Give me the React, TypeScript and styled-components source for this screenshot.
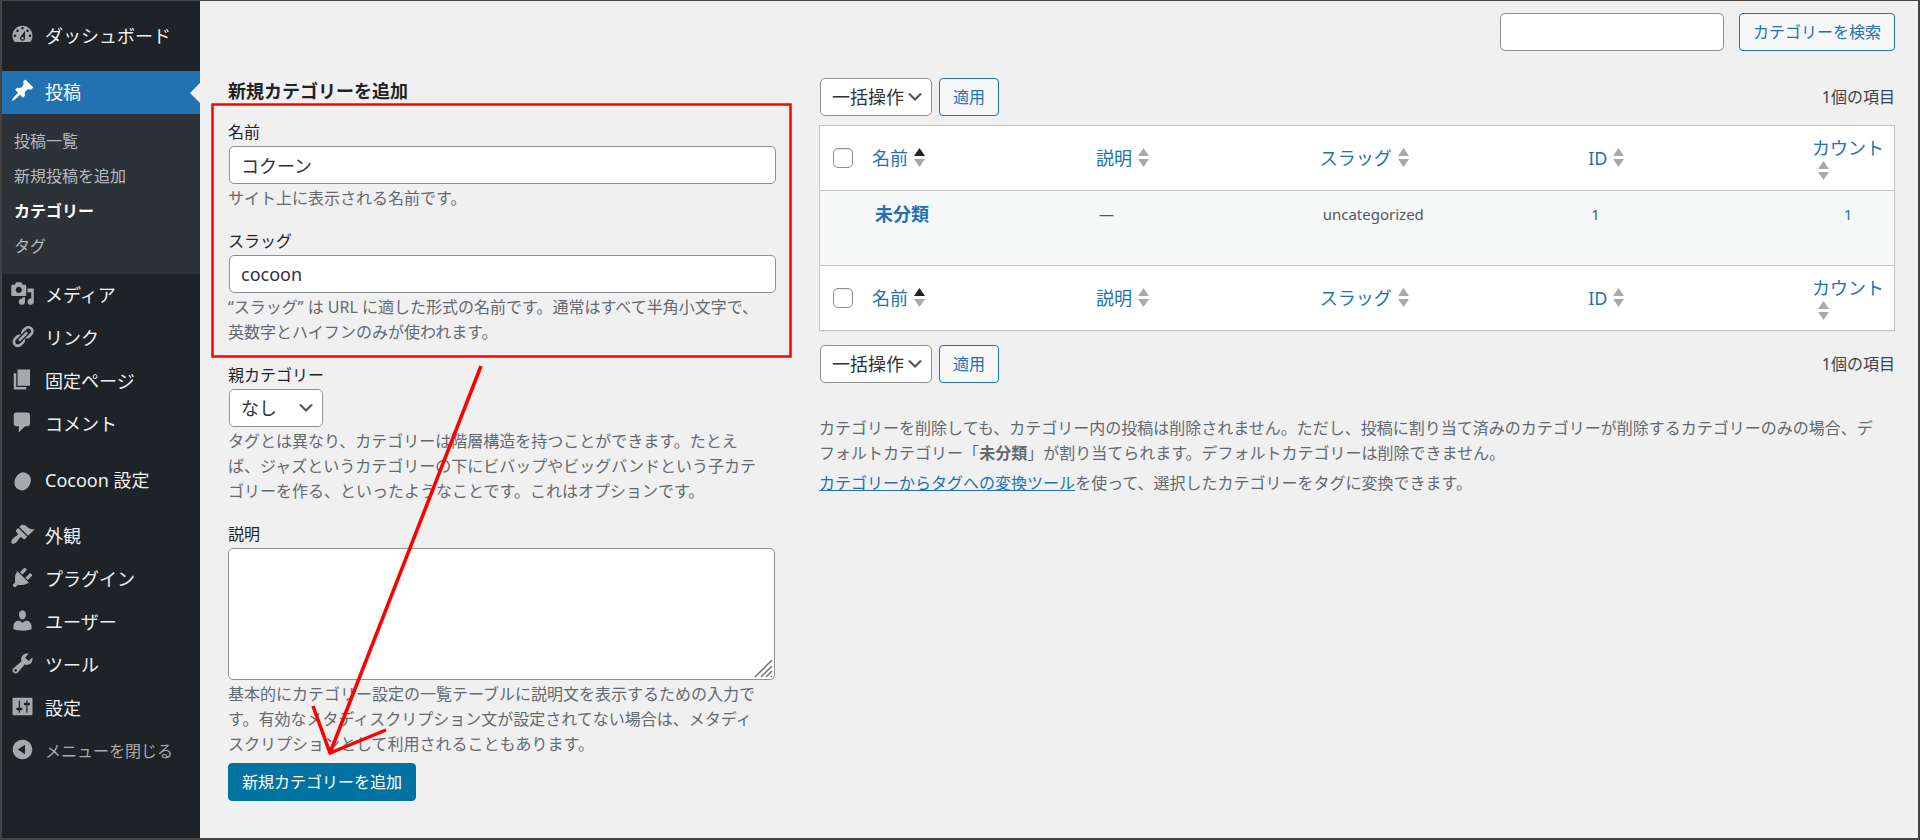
import React from 'react';
import styled, { createGlobalStyle, css } from 'styled-components';

const color = {
  page: '#f0f0f0',
  sidebar: '#1d2327',
  submenu: '#2c3338',
  blue: '#2271b1',
  primary: '#0073a3',
  text: '#1d2327',
  body: '#50575e',
  muted: '#646970',
  control: '#8c8f94',
  line: '#c3c4c7',
  icon: '#a7aaad',
  mark: '#ff0000',
};

const GlobalStyle = createGlobalStyle`
  *, *::before, *::after { box-sizing: border-box; }
  body {
    margin: 0;
    background: ${color.page};
    color: ${color.text};
    font-family: 'Noto Sans', 'Noto Sans CJK JP', sans-serif;
    font-size: 16px;
    line-height: 24px;
    text-spacing-trim: space-all;
  }
  button, input, select, textarea { font: inherit; margin: 0; }
  h2, p, ul { margin: 0; padding: 0; }
`;

const Frame = styled.div`
  display: flex;
  min-height: 100vh;
  border: solid #444444;
  border-width: 1px 2px 2px;
`;

/* ---------- sidebar ---------- */

const Sidebar = styled.nav`
  flex: 0 0 198px;
  padding-top: 14px;
  background: ${color.sidebar};
`;

const Menu = styled.ul`
  list-style: none;
`;

const MenuEntry = styled.li<{ $spaced?: boolean }>`
  margin-bottom: ${(p) => (p.$spaced ? 13 : 0)}px;
`;

const menuRow = css`
  position: relative;
  display: flex;
  align-items: flex-start;
  gap: 10px;
  width: 100%;
  height: 43px;
  padding: 0 0 0 8px;
  border: 0;
  text-align: left;
  text-decoration: none;
  white-space: nowrap;
  line-height: 43px;
`;

const MenuLink = styled.a<{ $active?: boolean }>`
  ${menuRow}
  font-size: 18px;
  color: ${(p) => (p.$active ? '#ffffff' : '#f0f0f1')};
  background: ${(p) => (p.$active ? color.blue : 'transparent')};

  svg {
    fill: ${(p) => (p.$active ? '#ffffff' : color.icon)};
  }

  ${(p) =>
    p.$active &&
    css`
      &::after {
        content: '';
        position: absolute;
        right: 0;
        top: 12px;
        border: 10px solid transparent;
        border-left-width: 0;
        border-right-color: ${color.page};
      }
    `}
`;

const CollapseButton = styled.button`
  ${menuRow}
  font-size: 16px;
  color: ${color.icon};
  background: none;

  svg {
    fill: ${color.icon};
  }
`;

const MenuIcon = styled.svg`
  flex: none;
  width: 25px;
  height: 25px;
  margin-top: 7px;
`;

const Submenu = styled.ul`
  list-style: none;
  padding: 10px 0;
  background: ${color.submenu};
`;

const SubmenuLink = styled.a<{ $current?: boolean }>`
  display: block;
  padding-left: 12px;
  line-height: 35px;
  text-decoration: none;
  font-weight: ${(p) => (p.$current ? 700 : 400)};
  color: ${(p) => (p.$current ? '#ffffff' : '#b4babf')};
`;

/* ---------- main area ---------- */

const Main = styled.main`
  flex: 1;
  min-width: 0;
  padding: 12px 23px 24px 28px;
`;

const SearchRow = styled.form`
  display: flex;
  justify-content: flex-end;
  gap: 15px;
  margin-bottom: 27px;
`;

const Columns = styled.div`
  display: grid;
  grid-template-columns: 33% minmax(0, 1fr);
  gap: 41px;
`;

const control = css`
  height: 38px;
  border: 1px solid ${color.control};
  border-radius: 5px;
  background: #ffffff;
  color: #2c3338;
`;

const SearchInput = styled.input`
  ${control}
  width: 224px;
  padding: 0 11px;
`;

const TextInput = styled.input`
  ${control}
  display: block;
  width: calc(100% - 3px);
  margin: 0 1px;
  padding: 0 11px;
  font-size: 18px;
`;

const Button = styled.button<{ $primary?: boolean }>`
  height: 38px;
  padding: 0 13px;
  border: 1px solid ${(p) => (p.$primary ? color.primary : color.blue)};
  border-radius: 4px;
  background: ${(p) => (p.$primary ? color.primary : '#f6f7f7')};
  color: ${(p) => (p.$primary ? '#ffffff' : color.blue)};
  white-space: nowrap;
  cursor: pointer;
`;

const SelectWrap = styled.div`
  position: relative;
  display: flex;
  width: fit-content;
  margin-left: 1px;
`;

const Select = styled.select`
  ${control}
  appearance: none;
  padding: 0 27px 0 11px;
  font-size: 18px;
`;

const Chevron = styled.svg`
  position: absolute;
  right: 7px;
  top: 9px;
  width: 20px;
  height: 20px;
  fill: #555555;
  pointer-events: none;
`;

/* ---------- add form ---------- */

const AddColumn = styled.section`
  position: relative;
`;

const Heading = styled.h2`
  margin-bottom: 16px;
  font-size: 18px;
  line-height: 26px;
  font-weight: 700;
`;

const Field = styled.div`
  margin-bottom: 18px;

  &:last-of-type {
    margin-bottom: 6px;
  }
`;

const Label = styled.label`
  display: block;
  margin-bottom: 2px;
`;

const Hint = styled.p`
  margin-top: 2px;
  padding-right: 12px;
  line-height: 25px;
  color: ${color.muted};
`;

const TextAreaWrap = styled.div`
  position: relative;
  margin-right: 3px;
`;

const TextArea = styled.textarea`
  ${control}
  display: block;
  width: 100%;
  height: 132px;
  padding: 6px 11px;
  resize: none;
`;

const Grip = styled.svg`
  position: absolute;
  right: 1px;
  bottom: 1px;
  width: 20px;
  height: 20px;
  stroke: #6f6f6f;
  stroke-width: 1.5;
  fill: none;
`;

const Markup = styled.svg`
  position: absolute;
  left: -18px;
  top: 24px;
  width: 582px;
  height: 660px;
  fill: none;
  stroke: ${color.mark};
  pointer-events: none;
`;

/* ---------- list ---------- */

const ListColumn = styled.section`
  min-width: 0;
`;

const Toolbar = styled.div`
  display: flex;
  align-items: center;
  gap: 7px;
`;

const ItemCount = styled.span`
  margin-left: auto;
  color: #3c434a;
`;

const Table = styled.table`
  width: 100%;
  margin: 9px 0 14px;
  table-layout: fixed;
  border: 1px solid ${color.line};
  border-spacing: 0;
  background: #ffffff;
  box-shadow: 0 1px 1px rgba(0, 0, 0, 0.04);
`;

const Col = styled.col<{ $width?: string }>`
  width: ${(p) => p.$width ?? 'auto'};
`;

const HeadCell = styled.th<{ $edge: 'top' | 'bottom' }>`
  height: 65px;
  padding: 0 10px;
  border: 0 solid ${color.line};
  border-${(p) => (p.$edge === 'top' ? 'bottom' : 'top')}-width: 1px;
  font-weight: 400;
  text-align: left;
  vertical-align: middle;
`;

const CheckCell = styled(HeadCell)`
  padding: 0 0 0 13px;
`;

const Checkbox = styled.input`
  display: block;
  appearance: none;
  width: 20px;
  height: 20px;
  border: 1px solid ${color.control};
  border-radius: 5px;
  background: #ffffff;
  box-shadow: inset 0 1px 2px rgba(0, 0, 0, 0.1);
`;

const SortLink = styled.a`
  display: flex;
  flex-wrap: wrap;
  align-items: center;
  font-size: 18px;
  line-height: 25px;
  color: ${color.blue};
  text-decoration: none;
`;

const SortArrows = styled.svg`
  width: 11px;
  height: 20px;
  margin-left: 6px;
  fill: ${color.icon};
`;

const Cell = styled.td<{ $center?: boolean }>`
  height: 74px;
  padding: 11px 13px;
  background: #f6f7f7;
  color: ${color.body};
  font-size: 15px;
  vertical-align: top;
  text-align: ${(p) => (p.$center ? 'center' : 'left')};

  a {
    color: ${color.blue};
    text-decoration: none;
  }
`;

const RowTitle = styled.a`
  font-size: 18px;
  font-weight: 700;
`;

const Notes = styled.div`
  margin-top: 33px;
  padding-right: 12px;
  line-height: 25px;
  color: ${color.muted};

  p + p {
    margin-top: 5px;
  }

  a {
    color: ${color.blue};
  }
`;

/* ---------- data ---------- */

const icons = {
  dashboard:
    'M3.76 16h12.48c1.1-1.37 1.76-3.11 1.76-5 0-4.42-3.58-8-8-8s-8 3.58-8 8c0 1.89.66 3.63 1.76 5zM10 4c.55 0 1 .45 1 1s-.45 1-1 1-1-.45-1-1 .45-1 1-1zM6 6c.55 0 1 .45 1 1s-.45 1-1 1-1-.45-1-1 .45-1 1-1zm8 0c.55 0 1 .45 1 1s-.45 1-1 1-1-.45-1-1 .45-1 1-1zm-5.37 5.55L12 7v6c0 1.1-.9 2-2 2s-2-.9-2-2c0-.57.24-1.08.63-1.45zM4 10c.55 0 1 .45 1 1s-.45 1-1 1-1-.45-1-1 .45-1 1-1zm12 0c.55 0 1 .45 1 1s-.45 1-1 1-1-.45-1-1 .45-1 1-1zm-5 3c0-.55-.45-1-1-1s-1 .45-1 1 .45 1 1 1 1-.45 1-1z',
  post: 'M10.44 3.02l1.82-1.82 6.36 6.35-1.83 1.82c-1.05-.68-2.48-.57-3.41.36l-.75.75c-.92.93-1.04 2.35-.35 3.41l-1.83 1.82-2.41-2.41-2.8 2.79c-.42.42-3.38 2.71-3.8 2.29s1.86-3.39 2.28-3.81l2.79-2.79L4.1 9.36l1.83-1.82c1.05.69 2.48.57 3.4-.36l.75-.75c.93-.92 1.05-2.35.36-3.41z',
  media:
    'M13 11V4c0-.55-.45-1-1-1h-1.67L9 1H5L3.67 3H2c-.55 0-1 .45-1 1v7c0 .55.45 1 1 1h10c.55 0 1-.45 1-1zM7 4.5c1.38 0 2.5 1.12 2.5 2.5S8.38 9.5 7 9.5 4.5 8.38 4.5 7 5.62 4.5 7 4.5zM14 6h5v10.5c0 1.38-1.12 2.5-2.5 2.5S14 17.88 14 16.5s1.12-2.5 2.5-2.5c.17 0 .34.02.5.05V9h-3V6zm-4 8.05V13h2v3.5c0 1.38-1.12 2.5-2.5 2.5S7 17.88 7 16.5 8.12 14 9.5 14c.17 0 .34.02.5.05z',
  link: 'M17.74 2.76c1.68 1.69 1.68 4.41 0 6.1l-1.53 1.52c-1.12 1.12-2.7 1.47-4.14 1.09l2.62-2.61.76-.77.76-.76c.84-.84.84-2.2 0-3.04-.84-.85-2.2-.85-3.04 0l-.77.76-3.38 3.38c-.37-1.44-.02-3.02 1.1-4.14l1.52-1.53c1.69-1.68 4.42-1.68 6.1 0zM8.59 13.43l5.34-5.34c.42-.42.42-1.1 0-1.52-.44-.43-1.13-.39-1.53 0l-5.33 5.34c-.42.42-.42 1.1 0 1.52.44.43 1.13.39 1.52 0zm-.76 2.29l4.14-4.15c.38 1.44.03 3.02-1.09 4.14l-1.52 1.53c-1.69 1.68-4.41 1.68-6.1 0-1.68-1.68-1.68-4.42 0-6.1l1.53-1.52c1.12-1.12 2.7-1.47 4.14-1.1l-4.14 4.15c-.85.84-.85 2.2 0 3.05.84.84 2.2.84 3.04 0z',
  page: 'M6 15V2h10v13H6zm-1 1h8v2H3V5h2v11z',
  comment: 'M5 2h9c1.1 0 2 .9 2 2v7c0 1.1-.9 2-2 2h-2l-5 5v-5H5c-1.1 0-2-.9-2-2V4c0-1.1.9-2 2-2z',
  cocoon: 'M13.1 5.8A5.7 7.2 25 1 1 7.1 18.8A5.7 7.2 25 1 1 13.1 5.8z',
  appearance:
    'M14.48 11.06L7.41 3.99l1.5-1.5c.5-.56 2.3-.47 3.51.32 1.21.8 1.43 1.28 2.91 2.1 1.18.64 2.45 1.26 4.45.85zm-.71.71L6.7 4.7 4.93 6.47c-.39.39-.39 1.02 0 1.41l1.06 1.06c.39.39.39 1.03 0 1.42-.6.6-1.43 1.11-2.21 1.69-.35.26-.7.53-1.01.84C1.43 14.23.4 16.08 1.4 17.07c.99 1 2.84-.03 4.18-1.36.31-.31.58-.66.85-1.02.57-.78 1.08-1.61 1.69-2.21.39-.39 1.02-.39 1.41 0l1.06 1.06c.39.39 1.02.39 1.41 0z',
  plugin:
    'M13.11 4.36L9.87 7.6 8 5.73l3.24-3.24c.35-.34 1.05-.2 1.56.32.52.51.66 1.21.31 1.55zm-8 1.77l.91-1.12 9.01 9.01-1.19.84c-.71.71-2.63 1.16-3.82 1.16H6.14L4.9 17.26c-.59.59-1.54.59-2.12 0-.59-.58-.59-1.53 0-2.12l1.24-1.24v-3.88c0-1.13.4-3.19 1.09-3.89zm7.26 3.97l3.24-3.24c.34-.35 1.04-.21 1.55.31.52.51.66 1.21.31 1.55l-3.24 3.25z',
  user: 'M10 9.25c-2.27 0-2.73-3.44-2.73-3.44C7 4.02 7.82 2 9.97 2c2.16 0 2.98 2.02 2.71 3.81 0 0-.41 3.44-2.68 3.44zm0 2.57L12.72 10c2.39 0 4.52 2.33 4.52 4.53v2.49s-3.65 1.13-7.24 1.13c-3.65 0-7.24-1.13-7.24-1.13v-2.49c0-2.25 1.94-4.48 4.47-4.48z',
  tool: 'M16.68 9.77c-1.34 1.34-3.3 1.67-4.95.99l-5.41 6.52c-.99.99-2.59.99-3.58 0s-.99-2.59 0-3.57l6.52-5.42c-.68-1.65-.35-3.61.99-4.95 1.28-1.28 3.12-1.62 4.72-1.06l-2.89 2.89 2.82 2.82 2.86-2.87c.53 1.58.18 3.39-1.08 4.65zM3.81 16.21c.4.39 1.04.39 1.43 0 .4-.4.4-1.04 0-1.43-.39-.4-1.03-.4-1.43 0-.39.39-.39 1.03 0 1.43z',
  setting:
    'M18 16V4c0-.55-.45-1-1-1H3c-.55 0-1 .45-1 1v12c0 .55.45 1 1 1h14c.55 0 1-.45 1-1zM8 11h1c.55 0 1 .45 1 1s-.45 1-1 1H8v1.5c0 .28-.22.5-.5.5s-.5-.22-.5-.5V13H6c-.55 0-1-.45-1-1s.45-1 1-1h1V5.500c0-.28.22-.5.5-.5s.5.22.5.5V11zm5-2h-1c-.55 0-1-.45-1-1s.45-1 1-1h1V5.500c0-.28.22-.5.5-.5s.5.22.5.5V7h1c.55 0 1 .45 1 1s-.45 1-1 1h-1v5.500c0 .28-.22.5-.5.5s-.5-.22-.5-.5V9z',
  collapse:
    'M10 2.16c4.33 0 7.84 3.51 7.84 7.84s-3.51 7.84-7.84 7.84S2.16 14.33 2.16 10 5.71 2.16 10 2.16zm2 11.72V6.12L6.18 9.97z',
};

type IconName = keyof typeof icons;

interface MenuItem {
  label: string;
  icon: IconName;
  spaced?: boolean;
  children?: string[];
}

const menu: MenuItem[] = [
  { label: 'ダッシュボード', icon: 'dashboard', spaced: true },
  { label: '投稿', icon: 'post', children: ['投稿一覧', '新規投稿を追加', 'カテゴリー', 'タグ'] },
  { label: 'メディア', icon: 'media' },
  { label: 'リンク', icon: 'link' },
  { label: '固定ページ', icon: 'page' },
  { label: 'コメント', icon: 'comment', spaced: true },
  { label: 'Cocoon 設定', icon: 'cocoon', spaced: true },
  { label: '外観', icon: 'appearance' },
  { label: 'プラグイン', icon: 'plugin' },
  { label: 'ユーザー', icon: 'user' },
  { label: 'ツール', icon: 'tool' },
  { label: '設定', icon: 'setting' },
];

const headings = ['名前', '説明', 'スラッグ', 'ID', 'カウント'];

const Icon = ({ name }: { name: IconName }) => (
  <MenuIcon viewBox="0 0 20 20" aria-hidden="true">
    <path d={icons[name]} fillRule="evenodd" />
  </MenuIcon>
);

const Dropdown = ({ id, label, options }: { id: string; label?: string; options: string[] }) => (
  <SelectWrap>
    <Select id={id} aria-label={label}>
      {options.map((o) => (
        <option key={o}>{o}</option>
      ))}
    </Select>
    <Chevron viewBox="0 0 20 20" aria-hidden="true">
      <path d="M5 6l5 5 5-5 2 1-7 7-7-7 2-1z" />
    </Chevron>
  </SelectWrap>
);

const BulkBar = ({ id }: { id: string }) => (
  <Toolbar>
    <Dropdown id={id} label="一括操作を選択" options={['一括操作', '削除']} />
    <Button type="button">適用</Button>
    <ItemCount>1個の項目</ItemCount>
  </Toolbar>
);

const HeadingRow = ({ edge }: { edge: 'top' | 'bottom' }) => (
  <tr>
    <CheckCell $edge={edge}>
      <Checkbox type="checkbox" aria-label="すべて選択" />
    </CheckCell>
    {headings.map((h, i) => (
      <HeadCell key={h} $edge={edge} scope="col">
        <SortLink href="#">
          <span>{h}</span>
          <SortArrows viewBox="0 0 11 20" aria-hidden="true">
            <path d="M0 8L5.5 0 11 8z" fill={i === 0 ? '#1d2327' : undefined} />
            <path d="M0 11h11L5.5 19z" />
          </SortArrows>
        </SortLink>
      </HeadCell>
    ))}
  </tr>
);

export default function App() {
  return (
    <>
      <GlobalStyle />
      <Frame lang="ja">
        <Sidebar>
          <Menu>
            {menu.map((item) => (
              <MenuEntry key={item.label} $spaced={item.spaced}>
                <MenuLink href="#" $active={!!item.children}>
                  <Icon name={item.icon} />
                  {item.label}
                </MenuLink>
                {item.children && (
                  <Submenu>
                    {item.children.map((c) => (
                      <li key={c}>
                        <SubmenuLink href="#" $current={c === 'カテゴリー'}>
                          {c}
                        </SubmenuLink>
                      </li>
                    ))}
                  </Submenu>
                )}
              </MenuEntry>
            ))}
            <MenuEntry>
              <CollapseButton type="button">
                <Icon name="collapse" />
                メニューを閉じる
              </CollapseButton>
            </MenuEntry>
          </Menu>
        </Sidebar>

        <Main>
          <SearchRow>
            <SearchInput type="search" aria-label="カテゴリーを検索" />
            <Button type="button">カテゴリーを検索</Button>
          </SearchRow>

          <Columns>
            <AddColumn>
              <Heading>新規カテゴリーを追加</Heading>
              <form>
                <Field>
                  <Label htmlFor="name">名前</Label>
                  <TextInput id="name" type="text" defaultValue="コクーン" />
                  <Hint>サイト上に表示される名前です。</Hint>
                </Field>
                <Field>
                  <Label htmlFor="slug">スラッグ</Label>
                  <TextInput id="slug" type="text" defaultValue="cocoon" />
                  <Hint>
                    “スラッグ” は URL に適した形式の名前です。通常はすべて半角小文字で、英数字とハイフンのみが使われます。
                  </Hint>
                </Field>
                <Field>
                  <Label htmlFor="parent">親カテゴリー</Label>
                  <Dropdown id="parent" options={['なし', '未分類']} />
                  <Hint>
                    タグとは異なり、カテゴリーは階層構造を持つことができます。たとえば、ジャズというカテゴリーの下にビバップやビッグバンドという子カテゴリーを作る、といったようなことです。これはオプションです。
                  </Hint>
                </Field>
                <Field>
                  <Label htmlFor="description">説明</Label>
                  <TextAreaWrap>
                    <TextArea id="description" />
                    <Grip viewBox="0 0 20 20" aria-hidden="true">
                      <path d="M1 18L18 1M7 18L18 7M12 18l6-6M17 18l1-1" />
                    </Grip>
                  </TextAreaWrap>
                  <Hint>
                    基本的にカテゴリー設定の一覧テーブルに説明文を表示するための入力です。有効なメタディスクリプション文が設定されてない場合は、メタディスクリプションとして利用されることもあります。
                  </Hint>
                </Field>
                <Button type="button" $primary>
                  新規カテゴリーを追加
                </Button>
              </form>
              <Markup viewBox="0 0 582 660" aria-hidden="true">
                <rect x="2.5" y="2.5" width="578" height="252" strokeWidth="2.5" />
                <path d="M271 264L120 651M103 604l17 47 56-23" strokeWidth="3.5" />
              </Markup>
            </AddColumn>

            <ListColumn>
              <BulkBar id="bulk-top" />
              <Table>
                <colgroup>
                  <Col $width="42px" />
                  <Col />
                  <Col />
                  <Col $width="25%" />
                  <Col />
                  <Col $width="92px" />
                </colgroup>
                <thead>
                  <HeadingRow edge="top" />
                </thead>
                <tbody>
                  <tr>
                    <Cell />
                    <Cell>
                      <RowTitle href="#">未分類</RowTitle>
                    </Cell>
                    <Cell>—</Cell>
                    <Cell>uncategorized</Cell>
                    <Cell>1</Cell>
                    <Cell $center>
                      <a href="#">1</a>
                    </Cell>
                  </tr>
                </tbody>
                <tfoot>
                  <HeadingRow edge="bottom" />
                </tfoot>
              </Table>
              <BulkBar id="bulk-bottom" />
              <Notes>
                <p>
                  カテゴリーを削除しても、カテゴリー内の投稿は削除されません。ただし、投稿に割り当て済みのカテゴリーが削除するカテゴリーのみの場合、デフォルトカテゴリー「<strong>未分類</strong>」が割り当てられます。デフォルトカテゴリーは削除できません。
                </p>
                <p>
                  <a href="#">カテゴリーからタグへの変換ツール</a>
                  を使って、選択したカテゴリーをタグに変換できます。
                </p>
              </Notes>
            </ListColumn>
          </Columns>
        </Main>
      </Frame>
    </>
  );
}
